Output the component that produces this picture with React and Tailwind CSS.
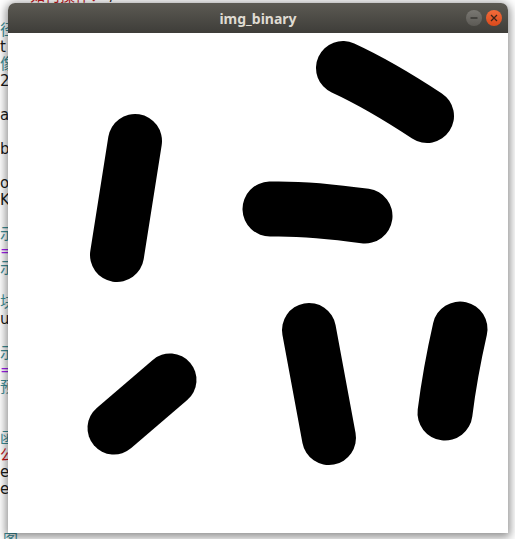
import React from 'react';

// lines of the text editor peeking out behind the window, 17px apart
const editorLines = [
  { t: '如何操作：', c: 'text-[#c4161c]', pad: 'pl-[30px]', tail: ' /' },
  { t: '' },
  { t: '径', c: 'text-[#3c8d96]' },
  { t: 't' },
  { t: '像', c: 'text-[#3c8d96]' },
  { t: '2' },
  { t: '' },
  { t: 'a' },
  { t: '' },
  { t: 'b' },
  { t: '' },
  { t: 'ov' },
  { t: 'K' },
  { t: '' },
  { t: '示', c: 'text-[#3c8d96]' },
  { t: '=', c: 'text-[#a020f0]' },
  { t: '示', c: 'text-[#3c8d96]' },
  { t: '' },
  { t: '块', c: 'text-[#3c8d96]' },
  { t: 'u' },
  { t: '' },
  { t: '示', c: 'text-[#3c8d96]' },
  { t: '=', c: 'text-[#a020f0]' },
  { t: '预', c: 'text-[#3c8d96]' },
  { t: '' },
  { t: '' },
  { t: '函', c: 'text-[#3c8d96]' },
  { t: '公', c: 'text-[#c4161c]' },
  { t: 'e' },
  { t: 'e' },
  { t: '' },
  { t: '' },
  { t: '图', c: 'text-[#3c8d96]', pad: 'pl-[3px]' },
];

// thick round-capped strokes of the binary image, in canvas coords (500x500)
const blobs = [
  { d: 'M335 35 Q372 52 419 83', w: 54 },
  { d: 'M127 108 L109 222', w: 54 },
  { d: 'M262 176 Q300 175 357 183', w: 55 },
  { d: 'M301 297 L321 405', w: 54 },
  { d: 'M452 296 Q442 340 437 380', w: 55 },
  { d: 'M162 347 L106 395', w: 53 },
];

function Editor() {
  return (
    <div className="flex flex-col -mt-[12px] font-['DejaVu_Sans','Noto_Sans_CJK_SC',sans-serif] text-[15px] text-[#1a1a1a]">
      {editorLines.map((l, i) => (
        <div key={i} className={`h-[17px] leading-[17px] whitespace-pre ${l.pad || ''}`}>
          <span className={l.c || ''}>{l.t}</span>
          {l.tail && <span className="text-[#1a1a1a]">{l.tail}</span>}
        </div>
      ))}
    </div>
  );
}

function TitleButtons() {
  return (
    <div className="flex items-center gap-[4px]">
      <button className="grid h-[16px] w-[16px] place-items-center rounded-full bg-gradient-to-b from-[#7a7873] to-[#5c5a55]">
        <svg width="8" height="8" viewBox="0 0 8 8">
          <line x1="0.5" y1="4" x2="7.5" y2="4" stroke="#3a3935" strokeWidth="1.6" />
        </svg>
      </button>
      <button className="grid h-[16px] w-[16px] place-items-center rounded-full bg-gradient-to-b from-[#f26b3a] to-[#d9491a]">
        <svg width="8" height="8" viewBox="0 0 8 8">
          <path d="M1 1L7 7M7 1L1 7" stroke="#3b2418" strokeWidth="1.3" />
        </svg>
      </button>
    </div>
  );
}

export default function App() {
  return (
    <div className="relative h-[539px] w-[515px] overflow-hidden bg-white">
      <Editor />

      {/* the image window */}
      <div className="absolute left-[8px] top-[3px] flex w-[500px] flex-col rounded-t-[7px] shadow-[0_2px_10px_2px_rgba(0,0,0,0.45)]">
        <div className="relative flex h-[30px] items-center justify-end rounded-t-[7px] bg-gradient-to-b from-[#5c5a53] to-[#3e3d39] pr-[6px]">
          <span className="absolute inset-x-0 text-center font-['Noto_Sans',sans-serif] text-[14px] font-bold text-[#dfdbd2]">
            img_binary
          </span>
          <div className="relative">
            <TitleButtons />
          </div>
        </div>
        <svg width="500" height="500" viewBox="0 0 500 500" className="block bg-white">
          {blobs.map((b, i) => (
            <path
              key={i}
              d={b.d}
              fill="none"
              stroke="#000"
              strokeWidth={b.w}
              strokeLinecap="round"
            />
          ))}
        </svg>
      </div>
    </div>
  );
}
